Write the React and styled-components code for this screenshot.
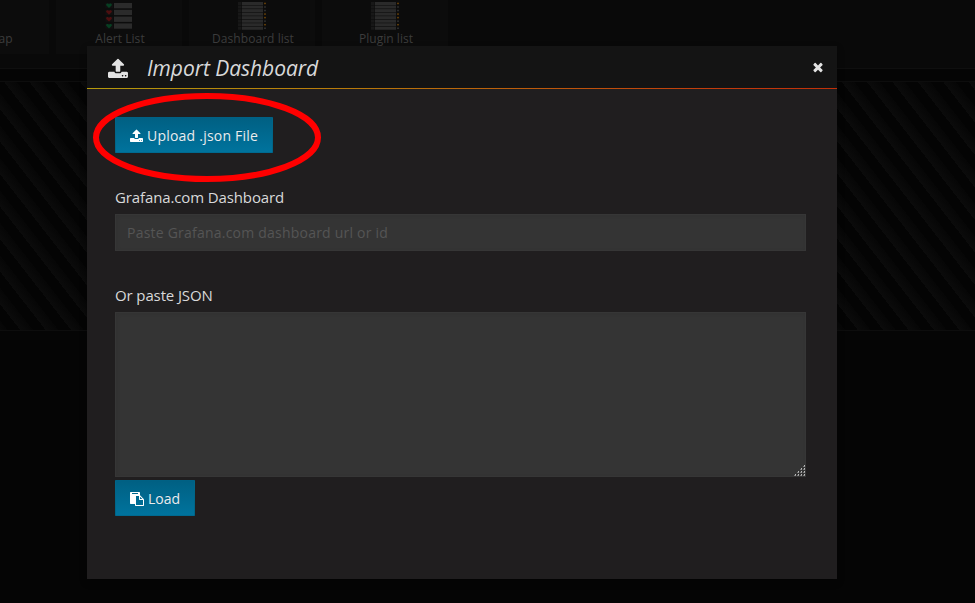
import React from "react";
import styled, { createGlobalStyle } from "styled-components";

const GlobalStyle = createGlobalStyle`
  *, *::before, *::after { box-sizing: border-box; }
  html, body { margin: 0; height: 100%; overflow: hidden; background: #050505; }
  body { font-family: "Open Sans", "Noto Sans", sans-serif; color: #d8d9da; }
`;

const Page = styled.div`
  position: relative;
  width: 975px;
  height: 603px;
  overflow: hidden;
  background: #050505;
  display: flex;
  flex-direction: column;
`;

const PanelPicker = styled.div`
  display: flex;
  gap: 7px;
  height: 69px;
  flex: none;
  background: #090909;
  border-bottom: 1px solid #0f0f0f;
`;

const PanelTile = styled.div`
  display: flex;
  flex-direction: column;
  align-items: center;
  flex: none;
  width: ${(p) => (p.$clipped ? 49 : 126)}px;
  height: 54px;
  background: #0c0c0c;
  color: #3c3c3c;
`;

const TileIcon = styled.svg`
  display: block;
  width: 30px;
  height: 30px;
  flex: none;
`;

const TileLabel = styled.span`
  font-size: 12px;
  line-height: 16px;
  margin-top: 1px;
  padding-left: 2px;
  letter-spacing: 0.05px;
  white-space: nowrap;
  ${(p) => p.$clipped && "align-self: flex-start; padding-left: 0; margin-left: -1.5px;"}
`;

const DropZone = styled.div`
  flex: none;
  height: 250px;
  margin-top: 12px;
  border-top: 1px solid #0d0d0d;
  border-bottom: 1px solid #0d0d0d;
  background: repeating-linear-gradient(
    -128deg,
    #040404,
    #040404 10px,
    #060606 10px,
    #0b0b0b 20px
  );
  background-size: 994px 248px;
`;

const Modal = styled.section`
  position: absolute;
  left: 87px;
  top: 46px;
  width: 750px;
  height: 533px;
  background: #201e1f;
  box-shadow: 0 3px 7px rgba(0, 0, 0, 0.3);
`;

const ModalHeader = styled.header`
  display: flex;
  align-items: center;
  height: 43px;
  padding: 0 12.5px 0 21px;
  background: #141414;
  border-bottom: 1px solid;
  border-image: linear-gradient(to right, #b59a0c 0%, #b87a0a 35%, #c23a0c 85%, #c03008 100%) 1;
`;

const HeaderIcon = styled.span`
  display: flex;
  padding-top: 3px;
  color: #e3e3e3;
`;

const ModalTitle = styled.h2`
  flex: 1;
  margin: 0 0 0 19px;
  padding-top: 2px;
  font-size: 21px;
  font-weight: 400;
  font-style: italic;
  line-height: 28px;
  letter-spacing: -0.05px;
`;

const CloseButton = styled.button`
  display: flex;
  padding: 0;
  border: 0;
  background: none;
  color: #e3e3e3;
`;

const Glyph = styled.svg`
  display: block;
  flex: none;
  fill: currentColor;
`;

const ModalBody = styled.div`
  display: flex;
  flex-direction: column;
  align-items: flex-start;
  padding: 28px 31px 0 28px;
`;

const Button = styled.button`
  display: flex;
  align-items: center;
  gap: 4px;
  height: 36px;
  width: ${(p) => p.$width}px;
  padding: 1px 0 0 14px;
  border: 1px solid;
  border-color: #006184 #006688 #006a90;
  border-radius: 1px;
  background: linear-gradient(#006083, #00739d);
  color: #ffffff;
  font: 400 14px/20px "Open Sans", sans-serif;
  letter-spacing: ${(p) => p.$tracking}px;
  text-shadow: 0 -1px 0 rgba(0, 0, 0, 0.15);
  white-space: nowrap;
`;

const ButtonText = styled.span`
  padding-top: 1px;
  color: #e9edf0;
`;

const FieldLabel = styled.label`
  font-size: 15px;
  line-height: 22px;
  letter-spacing: -0.12px;
  margin-top: ${(p) => p.$top}px;
  margin-bottom: 6px;
`;

const fieldSkin = `
  display: block;
  width: 691px;
  margin: 0;
  border: 1px solid #363636;
  border-radius: 0;
  outline: none;
  background: #343434;
  box-shadow: inset 1px 1px 4px rgba(0, 0, 0, 0.06);
  color: #d8d9da;
  font: 400 14px/20px "Open Sans", sans-serif;
  letter-spacing: 0.22px;
`;

const TextInput = styled.input`
  ${fieldSkin}
  height: 37px;
  padding: 0 11px;
  &::placeholder { color: #555555; opacity: 1; }
`;

const JsonBox = styled.div`
  display: flex;
  position: relative;
  margin-bottom: 3px;
`;

const TextArea = styled.textarea`
  ${fieldSkin}
  height: 165px;
  padding: 8px 11px;
  resize: none;
`;

const Grip = styled.svg`
  position: absolute;
  right: 1px;
  bottom: 1px;
`;

const Highlight = styled.svg`
  position: absolute;
  left: 90px;
  top: 90px;
  pointer-events: none;
`;

const UploadIcon = ({ size }) => (
  <Glyph width={(size * 1664) / 1792} height={size} viewBox="0 0 1664 1792">
    <path d="M1280 1472q0-26-19-45t-45-19-45 19-19 45 19 45 45 19 45-19 19-45zm256 0q0-26-19-45t-45-19-45 19-19 45 19 45 45 19 45-19 19-45zm128-224v320q0 40-28 68t-68 28h-1472q-40 0-68-28t-28-68v-320q0-40 28-68t68-28h427q21 56 70.500 92t110.500 36h256q61 0 110.500-36t70.500-92h427q40 0 68 28t28 68zm-325-648q-17 40-59 40h-256v448q0 26-19 45t-45 19h-256q-26 0-45-19t-19-45v-448h-256q-42 0-59-40-17-39 14-69l448-448q18-19 45-19t45 19l448 448q31 30 14 69z" />
  </Glyph>
);

const TimesIcon = () => (
  <Glyph width="14" height="14" viewBox="0 0 1792 1792">
    <path d="M1490 1322q0 40-28 68l-136 136q-28 28-68 28t-68-28l-294-294-294 294q-28 28-68 28t-68-28l-136-136q-28-28-28-68t28-68l294-294-294-294q-28-28-28-68t28-68l136-136q28-28 68-28t68 28l294 294 294-294q28-28 68-28t68 28l136 136q28 28 28 68t-28 68l-294 294 294 294q28 28 28 68z" />
  </Glyph>
);

const PasteIcon = () => (
  <Glyph width="14" height="14" viewBox="0 0 1792 1792">
    <path d="M768 1664h896v-640h-416q-40 0-68-28t-28-68v-416h-384v1152zm256-1440v-64q0-13-9.500-22.500t-22.500-9.500h-704q-13 0-22.500 9.500t-9.500 22.500v64q0 13 9.500 22.500t22.500 9.500h704q13 0 22.500-9.500t9.500-22.500zm256 672h299l-299-299v299zm512 128v672q0 40-28 68t-68 28h-960q-40 0-68-28t-28-68v-160h-544q-40 0-68-28t-28-68v-1344q0-40 28-68t68-28h1088q40 0 68 28t28 68v328q21 13 36 28l408 408q28 28 48 76t20 88z" />
  </Glyph>
);

const alertColors = ["#073f22", "#4d0f10", "#4d0f10", "#073f22"];

const AlertListIcon = () => (
  <TileIcon viewBox="0 0 30 30">
    {alertColors.map((color, i) => (
      <g key={i} transform={`translate(0 ${3 + i * 6.8})`}>
        <rect x="1.500" width="7.500" height="5.300" fill="#101010" />
        <path d="M5 5L2.200 2.300V1.200L3 .5h1.200l.8.800.8-.800H7l.8.700v1.100z" fill={color} />
        <rect x="10" width="18" height="5.300" fill="#2b2b2b" />
      </g>
    ))}
  </TileIcon>
);

const ListIcon = () => (
  <TileIcon viewBox="0 0 30 30">
    {Array.from({ length: 8 }, (_, i) => (
      <g key={i} transform={`translate(0 ${2 + i * 3.54})`}>
        <rect x="1" width="3.500" height="3" fill="#181818" />
        <rect x="5" width="21" height="3" fill="#2a2a2a" />
        <rect x="27" y="0.700" width="2" height="1.500" fill={[0, 3, 4, 6].includes(i) ? "#5c3a08" : "#2c2c2c"} />
      </g>
    ))}
  </TileIcon>
);

const gripDots = [];
for (let row = 0; row < 4; row += 1) {
  for (let col = 3 - row; col < 4; col += 1) gripDots.push([col, row]);
}

const ResizeGrip = () => (
  <Grip width="11" height="11" viewBox="0 0 11 11">
    {gripDots.map(([col, row]) => (
      <g key={`${col}-${row}`}>
        <rect x={col * 3} y={row * 3 + 1} width="1" height="1" fill="#777" />
        <rect x={col * 3 + 1} y={row * 3} width="1" height="1" fill="#bbb" />
        <rect x={col * 3 + 1} y={row * 3 + 1} width="1" height="1" fill="#999" />
      </g>
    ))}
  </Grip>
);

export default function App() {
  return (
    <>
      <GlobalStyle />
      <Page>
        <PanelPicker>
          <PanelTile $clipped>
            <TileIcon />
            <TileLabel $clipped>ap</TileLabel>
          </PanelTile>
          <PanelTile>
            <AlertListIcon />
            <TileLabel>Alert List</TileLabel>
          </PanelTile>
          <PanelTile>
            <ListIcon />
            <TileLabel>Dashboard list</TileLabel>
          </PanelTile>
          <PanelTile>
            <ListIcon />
            <TileLabel>Plugin list</TileLabel>
          </PanelTile>
        </PanelPicker>
        <DropZone />

        <Modal>
          <ModalHeader>
            <HeaderIcon>
              <UploadIcon size={21.5} />
            </HeaderIcon>
            <ModalTitle>Import Dashboard</ModalTitle>
            <CloseButton aria-label="Close">
              <TimesIcon />
            </CloseButton>
          </ModalHeader>
          <ModalBody>
            <Button $width={158} $tracking={0.22}>
              <UploadIcon size={14} />
              <ButtonText>Upload .json File</ButtonText>
            </Button>
            <FieldLabel $top={33}>Grafana.com Dashboard</FieldLabel>
            <TextInput placeholder="Paste Grafana.com dashboard url or id" />
            <FieldLabel $top={33}>Or paste JSON</FieldLabel>
            <JsonBox>
              <TextArea />
              <ResizeGrip />
            </JsonBox>
            <Button $width={80} $tracking={0}>
              <PasteIcon />
              <ButtonText>Load</ButtonText>
            </Button>
          </ModalBody>
        </Modal>

        <Highlight width="234" height="94" viewBox="0 0 234 94">
          <ellipse cx="117" cy="47.500" rx="111" ry="41.500" fill="none" stroke="#ff0000" strokeWidth="6" />
        </Highlight>
      </Page>
    </>
  );
}
